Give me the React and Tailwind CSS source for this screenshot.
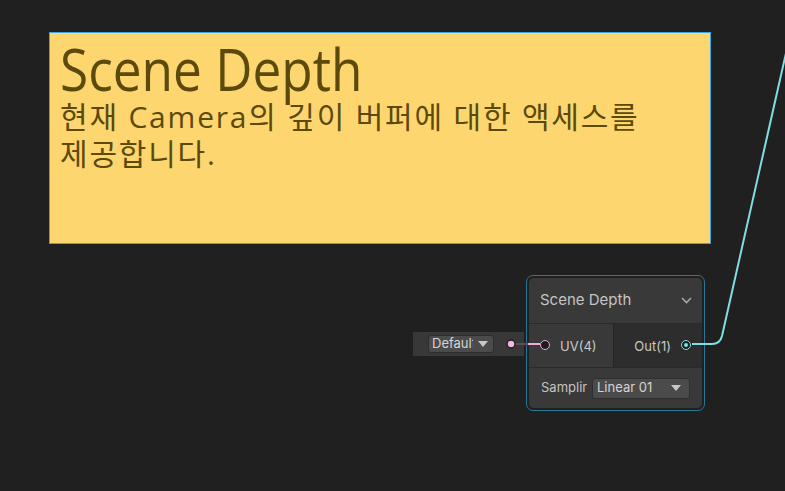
export default function App() {
  return (
    <div className="relative w-[785px] h-[491px] overflow-hidden bg-[#202020]" style={{ fontFamily: "Inter, 'Noto Sans', sans-serif" }}>
      {/* Sticky note */}
      <div className="absolute left-[49px] top-[32px] w-[662px] h-[212px] border border-[#3ea6e0] bg-[#fdd66f] pl-[10px] overflow-hidden">
        <div className="origin-left scale-x-[0.87] whitespace-nowrap text-[59px] leading-[60px] text-[#5b4a0c] mt-[5px]" style={{ fontFamily: "'Open Sans', 'Noto Sans CJK KR', sans-serif" }}>Scene Depth</div>
        <div className="text-[30px] leading-[37px] tracking-[1.8px] text-[#5b4a0c] whitespace-nowrap" style={{ fontFamily: "'Open Sans', 'Noto Sans CJK KR', sans-serif" }}>
          현재 Camera의 깊이 버퍼에 대한 액세스를
          <br />
          제공합니다.
        </div>
      </div>

      {/* Default input */}
      <div className="absolute left-[413px] top-[332px] w-[111px] h-[24px] bg-[#383838] flex items-center">
        <div className="ml-[15px] w-[66px] h-[18px] rounded-[3px] bg-[#4b4b4b] border border-[#2e2e2e] flex items-center pl-[3px] overflow-hidden">
          <span className="text-[13px] text-[#d4d4d4] w-[41px] mr-[5px] overflow-hidden whitespace-nowrap">Default</span>
          <svg width="10" height="6" viewBox="0 0 10 6"><path d="M0 0 L10 0 L5 6 Z" fill="#c8c8c8" /></svg>
        </div>
      </div>

      {/* Node */}
      <div className="absolute left-[526px] top-[275px] w-[179px] h-[136px] rounded-[7px] border border-[#2a7899] p-[2px]">
        <div className="w-full h-full rounded-[5px] overflow-hidden bg-[#2d2d2d] flex flex-col">
          <div className="h-[46px] bg-[#393939] flex items-center justify-between pl-[11px] pr-[10px] border-b border-[#2a2a2a]">
            <span className="text-[15px] text-[#c4c4c4]">Scene Depth</span>
            <svg width="11" height="7" viewBox="0 0 11 7"><path d="M1 1 L5.5 5.5 L10 1" fill="none" stroke="#a8a8a8" strokeWidth="1.6" /></svg>
          </div>
          <div className="h-[43px] flex">
            <div className="w-[85px] bg-[#393939] flex items-center border-r border-[#262626] pt-[2px]">
              <div className="ml-[11px] w-[10px] h-[10px] rounded-full border-[1.5px] border-[#f0a8d8] bg-[#1c1c1c] mt-[-3px]" />
              <span className="ml-[10px] text-[13px] text-[#c8c8c8]">UV(4)</span>
            </div>
            <div className="flex-1 bg-[#2d2d2d] flex items-center justify-end pr-[11px] pt-[2px]">
              <span className="text-[13px] text-[#c8c8c8]">Out(1)</span>
              <div className="ml-[10px] w-[10px] h-[10px] rounded-full border-[1.5px] border-[#7fdde6] bg-[#1c1c1c] flex items-center justify-center mt-[-3px]">
                <div className="w-[4px] h-[4px] rounded-full bg-[#7fdde6]" />
              </div>
            </div>
          </div>
          <div className="flex-1 bg-[#393939] flex items-center pl-[12px] border-t border-[#2a2a2a]">
            <span className="w-[51px] overflow-hidden whitespace-nowrap text-[13px] text-[#c4c4c4]">Samplir</span>
            <div className="w-[98px] h-[21px] rounded-[3px] bg-[#4b4b4b] border border-[#2e2e2e] flex items-center justify-between pl-[4px] pr-[8px]">
              <span className="text-[13px] text-[#d4d4d4]">Linear 01</span>
              <svg width="10" height="6" viewBox="0 0 10 6"><path d="M0 0 L10 0 L5 6 Z" fill="#c8c8c8" /></svg>
            </div>
          </div>
        </div>
      </div>

      {/* Wires */}
      <svg className="absolute left-0 top-0 pointer-events-none" width="785" height="491">
        <path d="M 692 344 L 712 344 Q 720 344 722 336 L 786 53" fill="none" stroke="#7fdde6" strokeWidth="2" />
        <line x1="514" y1="344" x2="528" y2="344" stroke="#5e4a58" strokeWidth="2" />
        <line x1="528" y1="344" x2="540" y2="344" stroke="#f0a8d8" strokeWidth="2" />
        <circle cx="511" cy="344" r="4" fill="#f4b8e0" stroke="#222" strokeWidth="1.5" />
      </svg>
    </div>
  );
}
